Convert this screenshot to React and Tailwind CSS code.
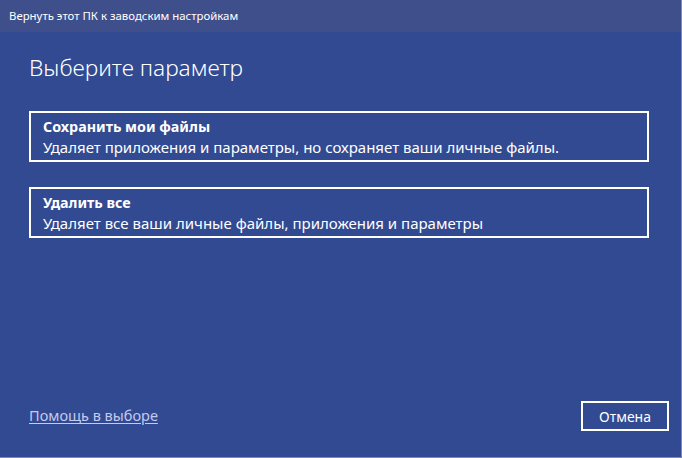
export default function App() {
  return (
    <div
      className="w-[682px] h-[458px] bg-[#324a91] flex flex-col border-r border-b border-[#8089b6] text-white"
      style={{ fontFamily: '"Noto Sans", "Open Sans", sans-serif' }}
    >
      {/* Title bar */}
      <div className="h-[32px] shrink-0 bg-[#3f4f8c] px-[9px] flex items-center text-[11.4px]">
        Вернуть этот ПК к заводским настройкам
      </div>

      <div className="flex-1 flex flex-col pl-[29px] pr-[12px]">
        <h1 className="mt-[20px] text-[22.7px] leading-[32px] font-light">Выберите параметр</h1>

        <div className="mt-[27px] flex flex-col gap-[25px] w-[620px]">
          <OptionCard
            title="Сохранить мои файлы"
            text="Удаляет приложения и параметры, но сохраняет ваши личные файлы."
          />
          <OptionCard
            title="Удалить все"
            text="Удаляет все ваши личные файлы, приложения и параметры"
          />
        </div>

        <div className="flex-1" />

        {/* Footer */}
        <div className="flex items-center justify-between pb-[26px]">
          <a href="#" className="text-[14.5px] text-[#c3cbf0] underline underline-offset-2">
            Помощь в выборе
          </a>
          <button className="w-[88px] h-[30px] border-2 border-white text-[14px]">Отмена</button>
        </div>
      </div>
    </div>
  )
}

function OptionCard({ title, text }) {
  return (
    <button className="border-2 border-white text-left pl-[12px] pt-[4px] pb-[3px] leading-[20px]">
      <div className="font-bold text-[14.3px]">{title}</div>
      <div className="text-[15px]">{text}</div>
    </button>
  )
}
